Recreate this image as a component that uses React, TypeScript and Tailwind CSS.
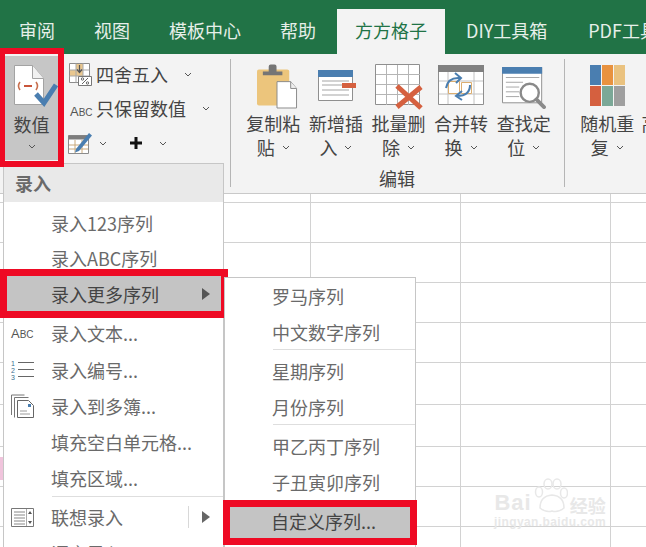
import type { ReactNode } from "react";

const rowHeights = [9, 40, 40, 40, 40, 42, 42, 40, 40, 21];
const colWidths = [161, 150, 150, 150, 35];

const tabs = ["审阅", "视图", "模板中心", "帮助", "方方格子", "DIY工具箱", "PDF工具"];

const Chevron = ({ className = "" }: { className?: string }) => (
  <svg width="8" height="5" viewBox="0 0 8 5" className={`shrink-0 ${className}`}>
    <path d="M1 1l3 3 3-3" fill="none" stroke="#555" strokeWidth="1" />
  </svg>
);

const ValueIcon = () => (
  <svg width="44" height="44" viewBox="0 0 44 44">
    <path d="M.5.5h18l11 13v26H.5z" fill="#fff" stroke="#a3a3a3" />
    <path d="M18.5.5v13h11" fill="#f1f1f1" stroke="#a3a3a3" />
    <path d="M6 17q-3 4 0 8M22 17q3 4 0 8" fill="none" stroke="#c9704f" strokeWidth="1.6" />
    <path d="M10 21h8" stroke="#c9553a" strokeWidth="2" />
    <path d="M22 29l8 9 12-18" fill="none" stroke="#4a7eb0" strokeWidth="5" />
  </svg>
);

const RoundIcon = () => (
  <svg width="24" height="24" viewBox="0 0 24 24">
    <path d="M.5.5h20v19H.5z" fill="#fff" stroke="#8c8c8c" />
    <path d="M7 1h7v12H1V7h6z" fill="#e9c78f" />
    <path d="M7 .5v19M14 .5v19M.5 7h20M.5 13h20" stroke="#a8a8a8" />
    <path d="M10.5 2v7M8 6.5l2.5 3 2.5-3" fill="none" stroke="#555" strokeWidth="1.2" />
    <path d="M9.5 13.5h13v9h-13z" fill="#fff" stroke="#777" />
    <path d="M13 21l6-6" stroke="#666" />
    <circle cx="13.5" cy="16" r="1.2" fill="none" stroke="#666" />
    <circle cx="18.5" cy="20" r="1.2" fill="none" stroke="#666" />
  </svg>
);

const EditTableIcon = () => (
  <svg width="24" height="24" viewBox="0 0 24 24">
    <path d="M.5 4.5h20v18H.5z" fill="#fff" stroke="#8c8c8c" />
    <path d="M.5 4.5h20v4H.5z" fill="#7d7d7d" />
    <path d="M7 9v13M14 9v13M1 14h19M1 18h19" stroke="#c9a87a" />
    <path d="M8 18L21 2l3 2.5L11 20l-4 1.500z" fill="#4a7eb0" />
  </svg>
);

const ClipboardIcon = () => (
  <svg width="41" height="46" viewBox="0 0 42 46">
    <rect x="0" y="5" width="33" height="37" rx="2" fill="#ecc57c" />
    <path d="M6 11V7h6V2q0-2 2-2h4q2 0 2 2v5h6v4z" fill="#757575" />
    <path d="M20.500 17.500h14l6 7v20h-20z" fill="#fff" stroke="#8a8a8a" />
    <path d="M34.500 17.500v7h6" fill="#eee" stroke="#8a8a8a" />
  </svg>
);

const InsertIcon = () => (
  <svg width="40" height="32" viewBox="0 0 40 32">
    <path d="M.5.500h34v30H.5z" fill="#fff" stroke="#8f8f8f" />
    <path d="M0 0h35v7H0z" fill="#4a7eb0" />
    <path d="M4 11h27M4 15h20M4 20h27M4 25h27" stroke="#a5a5a5" />
    <path d="M24 13h14v5H24z" fill="#d5603f" />
  </svg>
);

const DeleteIcon = () => (
  <svg width="48" height="46" viewBox="0 0 48 46">
    <path d="M.5.500h44v40H.5z" fill="#fff" stroke="#8f8f8f" />
    <path d="M11.500 1v40M22.500 1v40M33.500 1v40M1 10.500h44M1 20.500h44M1 30.500h44" stroke="#b5b5b5" />
    <path d="M22 22l24 22M46 23L22 43" stroke="#d5603f" strokeWidth="5" />
  </svg>
);

const MergeIcon = () => (
  <svg width="46" height="40" viewBox="0 0 46 40">
    <path d="M.5.500h45v39H.5z" fill="#fff" stroke="#8f8f8f" />
    <path d="M0 0h46v7H0z" fill="#808080" />
    <path d="M10 7v32M36 7v32M1 16h44M1 29h44" stroke="#c2c2c2" />
    <path d="M10.500 16.500h11v12h-11zM23.500 17.500h10v11h-10z" fill="none" stroke="#dcae70" />
    <path d="M8 23q2-11 14-10M17 8l6 5-5 5M32 20q0 11-13 11M24 26l-6 5 6 4" fill="none" stroke="#4a7eb0" strokeWidth="2" />
  </svg>
);

const FindIcon = () => (
  <svg width="44" height="42" viewBox="0 0 46 44">
    <path d="M.5.500h41v37H.5z" fill="#fff" stroke="#8f8f8f" />
    <path d="M0 0h42v7H0z" fill="#4a7eb0" />
    <path d="M4 11h35M4 16h18M4 21h14M4 26h14M4 31h14" stroke="#a5a5a5" />
    <circle cx="29" cy="27" r="9.500" fill="#fff" stroke="#8a8a8a" strokeWidth="2.500" />
    <path d="M36 34l8 8" stroke="#8a8a8a" strokeWidth="4" strokeLinecap="round" />
  </svg>
);

const PaletteIcon = () => (
  <svg width="35" height="41" viewBox="0 0 35 41">
    <path d="M0 0h11v20H0z" fill="#4a7eb0" />
    <path d="M12 0h11v20H12z" fill="#e8923f" />
    <path d="M24 0h11v20H24z" fill="#eac27f" />
    <path d="M0 21h11v20H0z" fill="#d5603f" />
    <path d="M12 21h11v20H12z" fill="#7ba897" />
    <path d="M24 21h11v20H24z" fill="#9f9f9f" />
  </svg>
);

const NumberedIcon = () => (
  <svg width="24" height="22" viewBox="0 0 24 22">
    <text x="0" y="7" fontSize="7" fill="#3a6f8f" fontFamily="Liberation Sans">1</text>
    <text x="0" y="14" fontSize="7" fill="#3a6f8f" fontFamily="Liberation Sans">2</text>
    <text x="0" y="21" fontSize="7" fill="#3a6f8f" fontFamily="Liberation Sans">3</text>
    <path d="M7 3.500h16M7 10.500h16M7 17.500h16" stroke="#666" />
  </svg>
);

const MultiBookIcon = () => (
  <svg width="24" height="25" viewBox="0 0 24 25">
    <path d="M.5 1h13M.5 1v20M3.500 3.500h14M3.500 3.500v20" fill="none" stroke="#777" />
    <path d="M6.500 6.500h11l5 5v12h-16z" fill="#fff" stroke="#666" />
    <path d="M9 17h7M9 20h10" stroke="#9a9a9a" />
    <path d="M17 10h3v3h-3z" fill="#4a7eb0" />
  </svg>
);

const ListBoxIcon = () => (
  <svg width="23" height="19" viewBox="0 0 23 19">
    <path d="M.5.500h22v18H.5z" fill="#fff" stroke="#777" />
    <path d="M3 4h11M3 7h11M3 10h11M3 13h11M3 16h11" stroke="#888" />
    <path d="M15.500 1v17" stroke="#aaa" />
    <path d="M19 3l2 3h-4zM19 16l2-3h-4z" fill="#555" />
  </svg>
);

const VoiceIcon = () => (
  <svg width="20" height="18" viewBox="0 0 20 18">
    <path d="M6 10l7-5v12H6z" fill="#666" />
  </svg>
);

const AbcLabel = () => (
  <span className="font-['Liberation_Sans',sans-serif] text-[10px] leading-none text-[#555]">
    <span className="text-[13px]">A</span>BC
  </span>
);

const BigButton = ({
  icon,
  iconClass,
  first,
  second,
}: {
  icon: ReactNode;
  iconClass: string;
  first: string;
  second: string;
}) => (
  <div className="flex w-[62.6px] shrink-0 flex-col items-center">
    <div className="flex h-[57px] items-end justify-center pb-[1px]">
      <div className={iconClass}>{icon}</div>
    </div>
    <div className="mt-[1px] whitespace-nowrap text-[18px] leading-[23px]">{first}</div>
    <div className="mt-[1px] flex items-center gap-[7px] text-[18px] leading-[23px]">
      {second}
      <Chevron />
    </div>
  </div>
);

const MenuRow = ({
  label,
  icon,
  height = "h-9",
  children,
}: {
  label: string;
  icon?: ReactNode;
  height?: string;
  children?: ReactNode;
}) => (
  <div className={`flex ${height} items-center text-[18px] text-[#6a6a6a]`}>
    <div className="flex w-[47px] shrink-0 items-center pl-[7px]">{icon}</div>
    <span className="whitespace-nowrap">{label}</span>
    {children}
  </div>
);

const SubRow = ({ label }: { label: string }) => (
  <div className="flex h-9 items-center whitespace-nowrap pl-[47px] text-[18px] text-[#6a6a6a]">{label}</div>
);

const Arrow = ({ color = "#555" }: { color?: string }) => (
  <svg width="8" height="12" viewBox="0 0 8 12">
    <path d="M0 0l8 6-8 6z" fill={color} />
  </svg>
);

export default function App() {
  return (
    <div className="relative h-[547px] w-[646px] overflow-hidden bg-white font-['Noto_Sans_CJK_SC','Noto_Sans',sans-serif] text-[#444]">
      <div className="flex h-[54px] items-end gap-[3px] bg-[#217346] pl-px">
        {tabs.map((tab) => (
          <div
            key={tab}
            className={
              tab === "方方格子"
                ? "flex h-[45px] shrink-0 items-center whitespace-nowrap bg-[#f3f3f3] px-[18px] pb-[2px] text-[18px] text-[#217346]"
                : tab === "PDF工具"
                  ? "ml-[2px] flex h-[45px] shrink-0 items-center whitespace-nowrap px-[18px] pb-[2px] text-[18px] text-[#e6efe9]"
                  : "flex h-[45px] shrink-0 items-center whitespace-nowrap px-[18px] pb-[2px] text-[18px] text-[#e6efe9]"
            }
          >
            {tab}
          </div>
        ))}
      </div>

      <div className="flex h-[140px] border-b border-[#c9c9c9] bg-[#f3f3f3]">
        <div className="mt-[2px] ml-[5px] flex h-[104px] w-[53px] shrink-0 flex-col items-center bg-[#c6c6c6]">
          <div className="mt-[9px] ml-[8px]">
            <ValueIcon />
          </div>
          <div className="mt-[3px] text-[18px] leading-[24px]">数值</div>
          <Chevron className="mt-[8px]" />
        </div>

        <div className="ml-[9px] w-[163px] shrink-0 pt-[8px] text-[18px]">
          <div className="flex h-[25px] items-center">
            <div className="ml-[2px] w-[27px]">
              <RoundIcon />
            </div>
            <span>四舍五入</span>
            <Chevron className="ml-[16px]" />
          </div>
          <div className="mt-[9px] flex h-[25px] items-center">
            <div className="ml-[3px] w-[26px]">
              <AbcLabel />
            </div>
            <span>只保留数值</span>
            <Chevron className="ml-[16px]" />
          </div>
          <div className="mt-[9px] flex h-[26px] items-center">
            <div className="ml-[1px] w-[31px]">
              <EditTableIcon />
            </div>
            <Chevron />
            <svg width="12" height="12" viewBox="0 0 12 12" className="ml-[23px]">
              <path d="M0 6h12M6 0v12" stroke="#111" strokeWidth="3" />
            </svg>
            <Chevron className="ml-[17px]" />
          </div>
        </div>

        <div className="mt-[5px] h-[128px] w-px shrink-0 bg-[#b5b5b5]" />

        <div className="ml-[11px] flex w-[322px] shrink-0 flex-col">
          <div className="flex">
            <BigButton icon={<ClipboardIcon />} iconClass="ml-[8px]" first="复制粘" second="贴" />
            <BigButton icon={<InsertIcon />} iconClass="ml-[4px] mb-[8px]" first="新增插" second="入" />
            <BigButton icon={<DeleteIcon />} iconClass="ml-[1px]" first="批量删" second="除" />
            <BigButton icon={<MergeIcon />} iconClass="mb-[5px]" first="合并转" second="换" />
            <BigButton icon={<FindIcon />} iconClass="ml-[1px] mb-[1px]" first="查找定" second="位" />
          </div>
          <div className="mt-[7px] w-[310px] text-center text-[18px] leading-[24px]">编辑</div>
        </div>

        <div className="mt-[5px] h-[128px] w-px shrink-0 bg-[#b5b5b5]" />

        <div className="ml-[11px]">
          <BigButton icon={<PaletteIcon />} iconClass="ml-[1px] mb-[4px]" first="随机重" second="复" />
        </div>
        <div className="ml-[3px] mt-[58px] text-[18px] leading-[23px]">高</div>
      </div>

      <div className="flex flex-col">
        {rowHeights.map((height, row) => (
          <div key={row} className="flex" style={{ height }}>
            {colWidths.map((width, col) => (
              <div
                key={col}
                className="shrink-0 border-r border-b border-[#d2d2d2] last:border-r-0"
                style={{ width }}
              />
            ))}
          </div>
        ))}
      </div>

      <div className="absolute top-[457px] left-0 h-[23px] w-[3px] bg-[#f0c4dc]" />

      <div className="absolute top-[163px] left-[3px] h-[400px] w-[221px] border border-[#c6c6c6] bg-white">
        <div className="flex h-[38px] items-center bg-[#e9e9e9] pl-[11px] text-[18px] font-bold text-[#6a6a6a]">录入</div>
        <div className="pt-[3px]">
          <MenuRow label="录入123序列" />
          <MenuRow label="录入ABC序列" height="h-[35px]" />
          <MenuRow label="录入更多序列" height="h-[36px]" />
          <div className="h-[3px]" />
          <MenuRow label="录入文本..." icon={<AbcLabel />} />
          <div className="h-px" />
          <MenuRow label="录入编号..." icon={<NumberedIcon />} />
          <MenuRow label="录入到多簿..." icon={<MultiBookIcon />} />
          <MenuRow label="填充空白单元格..." />
          <MenuRow label="填充区域..." />
          <div className="ml-[48px] h-px bg-[#dedede]" />
          <div className="h-[2px]" />
          <MenuRow label="联想录入" icon={<ListBoxIcon />} height="h-[36px]">
            <div className="ml-auto mr-[13px] flex items-center gap-[13px]">
              <div className="h-[22px] w-px bg-[#d8d8d8]" />
              <Arrow color="#666" />
            </div>
          </MenuRow>
          <MenuRow label="语言录入" icon={<VoiceIcon />} />
        </div>
      </div>

      <div className="absolute top-[269px] left-0 flex h-[49px] w-[228px] items-center justify-between border-[7px] border-[#ee0a24] bg-[#c4c4c4] pt-px pr-[11px] pl-[44px] text-[18px] text-[#444]">
        <span className="whitespace-nowrap">录入更多序列</span>
        <Arrow />
      </div>

      <div className="absolute top-[277px] left-[224px] h-[290px] w-[192px] border border-[#c6c6c6] bg-white">
        <SubRow label="罗马序列" />
        <SubRow label="中文数字序列" />
        <div className="mt-[-1px] ml-[48px] h-px bg-[#dedede]" />
        <div className="h-[3px]" />
        <SubRow label="星期序列" />
        <SubRow label="月份序列" />
        <div className="mt-[-1px] ml-[48px] h-px bg-[#dedede]" />
        <div className="h-[3px]" />
        <SubRow label="甲乙丙丁序列" />
        <SubRow label="子丑寅卯序列" />
      </div>

      <div className="absolute top-[500px] left-[223px] flex h-[45px] w-[194px] items-center whitespace-nowrap border-[7px] border-[#ee0a24] bg-[#c4c4c4] pb-[2px] pl-[41px] text-[18px] text-[#444]">
        自定义序列...
      </div>

      <div className="absolute top-[478px] left-[494px] flex flex-col items-center text-[#e8e8e8]">
        <div className="flex items-end gap-[2px] leading-none">
          <span className="font-['Liberation_Sans',sans-serif] text-[22px] font-bold tracking-[1px]">Bai</span>
          <svg width="34" height="36" viewBox="0 0 34 36">
            <g fill="none" stroke="#e8e8e8" strokeWidth="1.500">
              <ellipse cx="14" cy="6" rx="4" ry="5" />
              <ellipse cx="23" cy="6" rx="4" ry="5" />
              <ellipse cx="5" cy="14" rx="3.500" ry="5" />
              <ellipse cx="30" cy="15" rx="3.500" ry="5" />
              <path d="M6 30q0-12 12-13 12 1 12 13-6 5-12 3-6 2-12-3z" />
            </g>
          </svg>
          <span className="text-[18px] font-bold">经验</span>
        </div>
        <span className="font-['Liberation_Sans',sans-serif] text-[12px] font-bold leading-[16px] tracking-[0.4px]">
          jingyan.baidu.com
        </span>
      </div>

      <div className="absolute top-[48px] left-[-1px] h-[119px] w-[65px] border-[6px] border-[#ee0a24]" />
    </div>
  );
}
